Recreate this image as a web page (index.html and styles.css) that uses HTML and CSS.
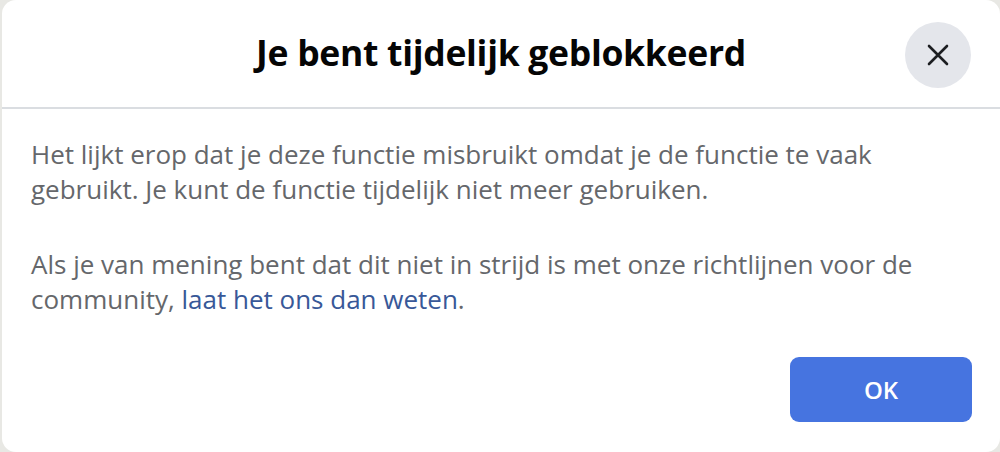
FILE: index.html
```html
<!DOCTYPE html>
<html lang="nl">
<head>
<meta charset="utf-8">
<link rel="stylesheet" href="styles.css">
</head>
<body>
<div class="dialog">
  <header class="head">
    <h1 class="title">Je bent tijdelijk geblokkeerd</h1>
    <button class="close" aria-label="Sluiten">
      <svg width="24" height="24" viewBox="0 0 24 24"><path d="M3 3 L21 21 M21 3 L3 21" stroke="#1c1e21" stroke-width="2.6" stroke-linecap="round" fill="none"/></svg>
    </button>
  </header>
  <div class="body">
    <p>Het lijkt erop dat je deze functie misbruikt omdat je de functie te vaak gebruikt. Je kunt de functie tijdelijk niet meer gebruiken.</p>
    <p>Als je van mening bent dat dit niet in strijd is met onze richtlijnen voor de community, <a class="link" href="#">laat het ons dan weten</a>.</p>
  </div>
  <footer class="foot">
    <button class="ok">OK</button>
  </footer>
</div>
</body>
</html>
```
FILE: styles.css
```css
html, body {
  margin: 0;
  padding: 0;
  height: 100%;
  background: #e8e8e4;
}
body {
  font-family: "Open Sans", "Noto Sans", sans-serif;
}
.dialog {
  box-sizing: border-box;
  height: 452px;
  margin-left: 2px;
  background: #fff;
  border-radius: 14px;
  display: flex;
  flex-direction: column;
}
.head {
  height: 108px;
  border-bottom: 2px solid #dadde1;
  display: flex;
  align-items: center;
  justify-content: center;
  position: relative;
}
.title {
  margin: 0 0 4px 0;
  font-size: 35.5px;
  font-weight: 700;
  color: #050505;
  letter-spacing: -0.3px;
}
.close {
  position: absolute;
  right: 29px;
  top: 22px;
  width: 66px;
  height: 66px;
  border-radius: 50%;
  border: none;
  background: #e4e6eb;
  display: flex;
  align-items: center;
  justify-content: center;
  padding: 0;
}
.body {
  padding: 28px 50px 0 29px;
  color: #65676b;
  font-size: 26px;
  line-height: 35px;
}
.body p {
  margin: 0 0 40px 0;
}
.link {
  color: #385898;
  text-decoration: none;
}
.foot {
  margin-top: auto;
  display: flex;
  justify-content: flex-end;
  padding: 0 28px 30px 0;
}
.ok {
  width: 182px;
  height: 65px;
  border: none;
  border-radius: 9px;
  background: #4674e0;
  color: #fff;
  font-family: "Open Sans", "Noto Sans", sans-serif;
  font-size: 24px;
  font-weight: 600;
}
```
